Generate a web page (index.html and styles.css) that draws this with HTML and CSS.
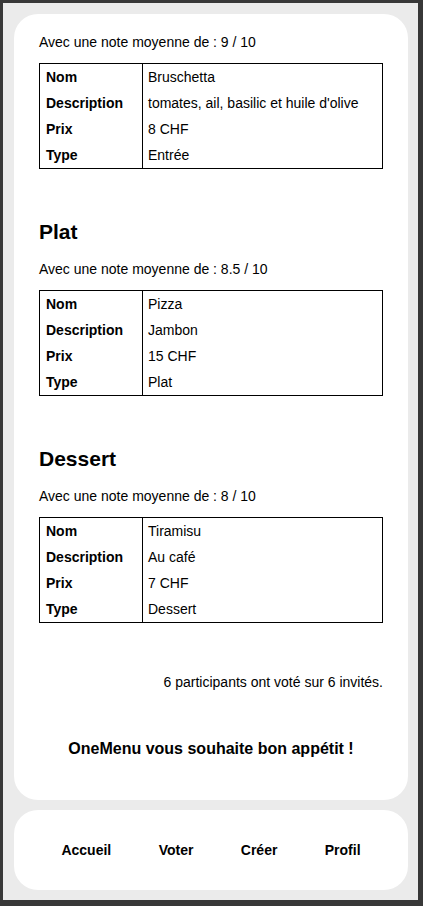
FILE: index.html
```html
<!DOCTYPE html>
<html lang="fr">
<head>
<meta charset="utf-8">
<title>OneMenu</title>
<link rel="stylesheet" href="styles.css">
</head>
<body>
<div class="screen">
  <main class="card">
    <section class="course first">
      <p class="note">Avec une note moyenne de : 9 / 10</p>
      <table class="dish">
        <tr><th>Nom</th><td>Bruschetta</td></tr>
        <tr><th>Description</th><td>tomates, ail, basilic et huile d'olive</td></tr>
        <tr><th>Prix</th><td>8 CHF</td></tr>
        <tr><th>Type</th><td>Entrée</td></tr>
      </table>
    </section>
    <section class="course">
      <h2 class="course-title">Plat</h2>
      <p class="note">Avec une note moyenne de : 8.5 / 10</p>
      <table class="dish">
        <tr><th>Nom</th><td>Pizza</td></tr>
        <tr><th>Description</th><td>Jambon</td></tr>
        <tr><th>Prix</th><td>15 CHF</td></tr>
        <tr><th>Type</th><td>Plat</td></tr>
      </table>
    </section>
    <section class="course">
      <h2 class="course-title">Dessert</h2>
      <p class="note">Avec une note moyenne de : 8 / 10</p>
      <table class="dish">
        <tr><th>Nom</th><td>Tiramisu</td></tr>
        <tr><th>Description</th><td>Au café</td></tr>
        <tr><th>Prix</th><td>7 CHF</td></tr>
        <tr><th>Type</th><td>Dessert</td></tr>
      </table>
    </section>
    <p class="votes">6 participants ont voté sur 6 invités.</p>
    <p class="wish">OneMenu vous souhaite bon appétit !</p>
  </main>
  <nav class="nav">
    <a class="nav-link" href="#">Accueil</a>
    <a class="nav-link" href="#">Voter</a>
    <a class="nav-link" href="#">Créer</a>
    <a class="nav-link" href="#">Profil</a>
  </nav>
</div>
</body>
</html>
```

FILE: styles.css
```css
* { box-sizing: border-box; }

html, body {
  margin: 0;
  padding: 0;
  background: #383838;
}

body {
  font-family: "Liberation Sans", Arial, sans-serif;
  font-size: 14px;
  line-height: 16px;
  color: #000;
}

.screen {
  margin: 3px 5px 6px 3px;
  height: 897px;
  background: #ebebeb;
  padding: 11px 10px 10px 11px;
  display: flex;
  flex-direction: column;
  gap: 10px;
}

.card {
  flex: 1;
  background: #fff;
  border-radius: 24px;
  padding: 20px 25px 0;
  display: flex;
  flex-direction: column;
}

.course {
  display: flex;
  flex-direction: column;
}

.course + .course {
  margin-top: 51px;
}

.course-title {
  margin: 0 0 17px;
  font-size: 21px;
  line-height: 24px;
  font-weight: bold;
}

.note {
  margin: 0 0 13px;
}

.dish {
  width: 100%;
  border-collapse: collapse;
  border: 1px solid #000;
}

.dish th,
.dish td {
  padding: 5px 6px;
  line-height: 16px;
  text-align: left;
  vertical-align: middle;
}

.dish th {
  width: 103px;
  font-weight: bold;
  border-right: 1px solid #000;
}

.dish td {
  padding-left: 5px;
}

.votes {
  margin: 51px 0 0;
  text-align: right;
}

.wish {
  margin: 49px 0 0;
  text-align: center;
  font-size: 16px;
  line-height: 19px;
  font-weight: bold;
}

.nav {
  height: 80px;
  background: #fff;
  border-radius: 24px;
  display: flex;
  align-items: center;
  justify-content: space-evenly;
}

.nav-link {
  color: #000;
  text-decoration: none;
  font-weight: bold;
  font-size: 14px;
}
```
